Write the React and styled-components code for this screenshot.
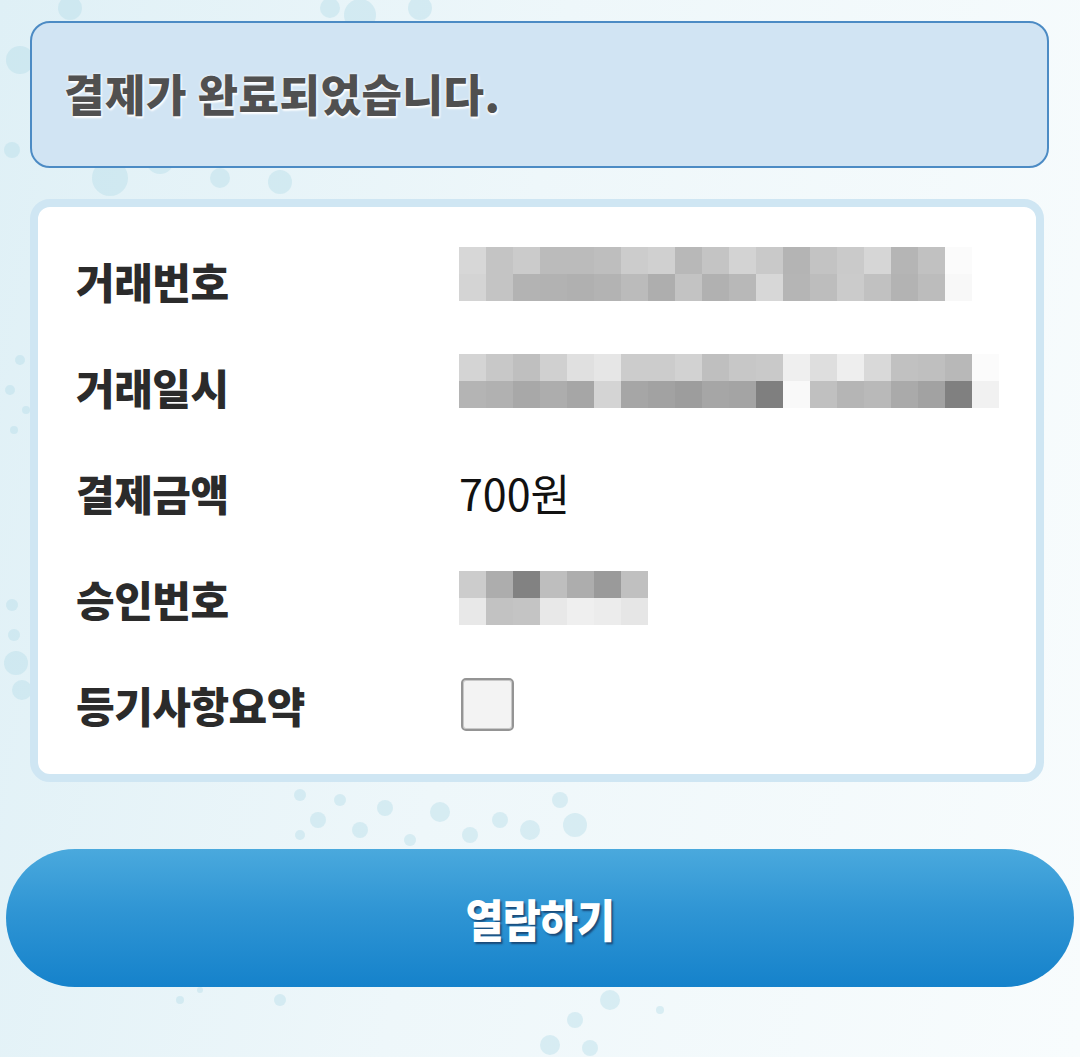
import React from 'react';
import styled, { createGlobalStyle } from 'styled-components';

const GlobalStyle = createGlobalStyle`
  html, body {
    margin: 0;
    padding: 0;
  }
  body {
    font-family: "Noto Sans CJK KR", "Noto Sans", sans-serif;
    background: #fff;
  }
`;

const Page = styled.div`
  position: relative;
  width: 1080px;
  height: 1057px;
  overflow: hidden;
  background: linear-gradient(100deg, #dff0f6 0%, #eef7fa 45%, #f8fcfd 100%);
  box-sizing: border-box;
  padding: 21px 31px 0 30px;
  display: flex;
  flex-direction: column;
`;

const Dots = styled.svg`
  position: absolute;
  left: 0;
  top: 0;
  width: 1080px;
  height: 1057px;
  pointer-events: none;
`;

const Content = styled.div`
  position: relative;
  display: flex;
  flex-direction: column;
`;

const Notice = styled.div`
  height: 147px;
  box-sizing: border-box;
  border: 2px solid #4c8bc4;
  border-radius: 20px;
  background: #d1e4f3;
  display: flex;
  align-items: center;
  padding: 0 0 4px 32px;
  font-size: 44px;
  font-weight: 900;
  letter-spacing: 0.5px;
  color: #505050;
  text-shadow: 0 0 3px #fff, 1px 2px 2px #fff;
`;

const Card = styled.div`
  margin-top: 31px;
  margin-right: 5px;
  border: 8px solid #cfe6f3;
  border-radius: 20px;
  background: #fff;
  padding: 20px 0 17px 38px;
`;

const Row = styled.div`
  display: grid;
  grid-template-columns: 383px 1fr;
  align-items: center;
  height: 106px;
`;

const Label = styled.div`
  font-size: 42px;
  font-weight: 900;
  letter-spacing: -0.5px;
  color: #2b2b2b;
`;

const Value = styled.div`
  font-size: 43px;
  font-weight: 400;
  letter-spacing: 0;
  color: #111;
`;

const Mosaic = styled.div`
  align-self: start;
  margin-top: ${(p) => p.top}px;
  display: grid;
  grid-template-columns: repeat(${(p) => p.cols}, 27px);
  grid-auto-rows: 27px;
`;

const Cell = styled.div`
  background: ${(p) => p.c};
`;

const Check = styled.div`
  width: 53px;
  height: 53px;
  box-sizing: border-box;
  margin-left: 2px;
  border: 2px solid #949494;
  border-radius: 5px;
  background: #f3f3f3;
  box-shadow: inset 0 0 0 1px #c8c8c8;
`;

const Button = styled.button`
  margin: 67px -25px 0 -24px;
  height: 138px;
  border: none;
  border-radius: 69px;
  background: linear-gradient(180deg, #4aa9dd 0%, #2f95d4 45%, #1582cb 100%);
  color: #fff;
  font-family: "Noto Sans CJK KR", "Noto Sans", sans-serif;
  font-size: 45px;
  font-weight: 900;
  text-shadow: 2px 2px 2px rgba(20, 50, 90, 0.75);
  cursor: pointer;
`;

const ButtonText = styled.span`
  display: inline-block;
  transform: scaleX(0.92);
  letter-spacing: -1px;
`;

const toColors = (s) => s.split(' ').map((h) => `#${h}${h}${h}`);

const tradeNo = toColors(
  'd7 c4 cb bb bb be cc d0 b8 c4 d3 c9 b4 c3 ca d6 b5 c1 fb ' +
    'd4 c4 b3 b2 b0 b3 bb ae c3 b1 b8 d7 b5 bd cb c1 b3 bc f8'
);
const tradeDate = toColors(
  'd4 c8 bf d0 e0 e6 cc cc d2 bf c7 c9 ef de ee d9 c1 bf b8 fb ' +
    'b4 b1 a8 ad a6 d4 a6 a2 9d a6 a4 7f f9 c0 b5 b9 aa a2 80 f1'
);
const approvalNo = toColors('cc ad 82 be ad 9a c0 e8 c2 c4 e8 ef ec e6');

const dots = [
  [20, 60, 14], [48, 110, 10], [12, 150, 8], [70, 8, 12], [110, 178, 18], [160, 160, 14],
  [220, 178, 10], [280, 182, 12], [330, 8, 10], [360, 15, 16], [420, 8, 12], [20, 360, 5],
  [10, 390, 5], [26, 410, 4], [14, 430, 4], [12, 605, 6], [14, 635, 6], [16, 663, 12],
  [22, 690, 10], [300, 795, 6], [318, 820, 8], [340, 800, 6], [360, 830, 8], [385, 808, 8],
  [410, 840, 6], [440, 812, 10], [470, 835, 8], [500, 820, 8], [530, 830, 10], [560, 800, 8],
  [575, 825, 12], [300, 835, 5], [180, 1000, 4], [200, 990, 3], [280, 1000, 6], [550, 1045, 10],
  [575, 1020, 8], [610, 1000, 10], [590, 1048, 8], [660, 1010, 4],
];

const Dotfield = () => (
  <Dots viewBox="0 0 1080 1057">
    {dots.map(([x, y, r], i) => (
      <circle key={i} cx={x} cy={y} r={r} fill="#b9dde8" opacity="0.45" />
    ))}
  </Dots>
);

const App = () => (
  <Page>
    <GlobalStyle />
    <Dotfield />
    <Content>
      <Notice>결제가 완료되었습니다.</Notice>
      <Card>
        <Row>
          <Label>거래번호</Label>
          <Mosaic cols={19} top={20}>
            {tradeNo.map((c, i) => (
              <Cell key={i} c={c} />
            ))}
          </Mosaic>
        </Row>
        <Row>
          <Label>거래일시</Label>
          <Mosaic cols={20} top={21}>
            {tradeDate.map((c, i) => (
              <Cell key={i} c={c} />
            ))}
          </Mosaic>
        </Row>
        <Row>
          <Label>결제금액</Label>
          <Value>700원</Value>
        </Row>
        <Row>
          <Label>승인번호</Label>
          <Mosaic cols={7} top={26}>
            {approvalNo.map((c, i) => (
              <Cell key={i} c={c} />
            ))}
          </Mosaic>
        </Row>
        <Row>
          <Label>등기사항요약</Label>
          <Check />
        </Row>
      </Card>
      <Button>
        <ButtonText>열람하기</ButtonText>
      </Button>
    </Content>
  </Page>
);

export default App;
